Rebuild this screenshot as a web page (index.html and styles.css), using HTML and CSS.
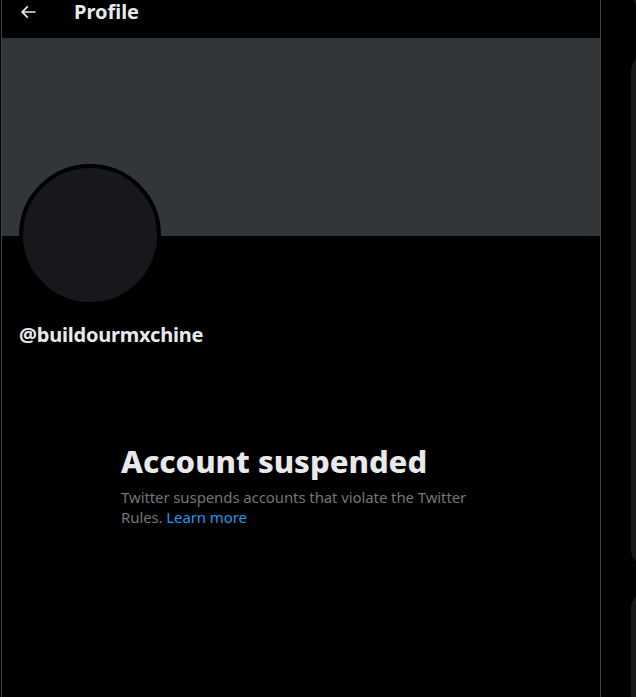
FILE: index.html
```html
<!DOCTYPE html>
<html>
<head>
<meta charset="utf-8">
<link rel="stylesheet" href="styles.css">
</head>
<body>
<div class="layout">
  <main class="column">
    <header class="topbar">
      <svg class="back" viewBox="0 0 24 24" width="20" height="20"><path fill="#e7e9ea" d="M7.414 13l5.043 5.04-1.414 1.42L3.586 12l7.457-7.46 1.414 1.42L7.414 11H21v2H7.414z"/></svg>
      <h1 class="title">Profile</h1>
    </header>
    <div class="banner"></div>
    <div class="profile">
      <div class="avatar"></div>
      <div class="handle">@buildourmxchine</div>
    </div>
    <section class="empty">
      <h2 class="empty-title">Account suspended</h2>
      <p class="empty-text">Twitter suspends accounts that violate the Twitter Rules. <a class="link" href="#">Learn more</a></p>
    </section>
  </main>
  <aside class="sidebar">
    <div class="panel panel-search"></div>
    <div class="panel panel-main"></div>
    <div class="panel panel-next"></div>
  </aside>
</div>
</body>
</html>
```
FILE: styles.css
```css
html, body {
  margin: 0;
  padding: 0;
  background: #000;
  height: 100%;
  overflow: hidden;
}
body {
  font-family: "Segoe UI", "Noto Sans", "Open Sans", sans-serif;
  color: #e7e9ea;
}
.layout {
  display: flex;
  padding-left: 1px;
  height: 697px;
  overflow: hidden;
}
.column {
  width: 598px;
  border-left: 1px solid #3e4144;
  border-right: 1px solid #3e4144;
  display: flex;
  flex-direction: column;
  flex-shrink: 0;
}
.topbar {
  height: 38px;
  display: flex;
  align-items: flex-start;
  padding-left: 16px;
  gap: 36px;
  box-sizing: border-box;
}
.back {
  margin-top: 2px;
}
.title {
  margin: 0;
  font-size: 20px;
  font-weight: 700;
  line-height: 24px;
}
.banner {
  height: 198px;
  flex-shrink: 0;
  background: #333639;
}
.profile {
  padding: 0 16px;
}
.avatar {
  width: 134px;
  height: 134px;
  border: 4px solid #000;
  border-radius: 50%;
  background: #16181c;
  margin-top: -72px;
  margin-left: 1px;
}
.handle {
  margin-top: 17px;
  font-size: 20px;
  font-weight: 700;
  line-height: 24px;
  margin-left: 1px;
  letter-spacing: -0.2px;
}
.empty {
  padding: 96px 0 0 119px;
  width: 360px;
}
.empty-title {
  margin: 0;
  font-size: 31px;
  font-weight: 800;
  line-height: 36px;
}
.empty-text {
  margin: 8px 0 0;
  font-size: 15px;
  line-height: 20px;
  letter-spacing: -0.1px;
  color: #71767b;
}
.link {
  color: #1d9bf0;
  text-decoration: none;
}
.sidebar {
  flex: 1;
  min-width: 0;
  overflow: hidden;
  padding-left: 30px;
  display: flex;
  flex-direction: column;
}
.panel {
  background: #16181c;
  border-radius: 16px;
  width: 350px;
  flex-shrink: 0;
}
.panel-search {
  height: 50px;
  margin-top: -35px;
  border-radius: 25px;
}
.panel-main {
  margin-top: 40px;
  height: 511px;
}
.panel-next {
  margin-top: 26px;
  height: 300px;
}
```
